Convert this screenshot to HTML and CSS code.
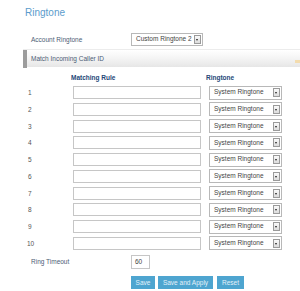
FILE: index.html
```html
<!DOCTYPE html>
<html>
<head>
<meta charset="utf-8">
<link rel="stylesheet" href="styles.css">
</head>
<body>
<div class="page">
  <h1 class="title">Ringtone</h1>
  <div class="account">
    <span class="label">Account Ringtone</span>
    <div class="select sel-account"><span class="sel-text">Custom Ringtone 2</span><span class="arrow"></span></div>
  </div>
  <div class="bar"><span class="bar-accent"></span><span class="bar-text">Match Incoming Caller ID</span><span class="bar-icon"></span></div>
  <div class="heads">
    <span class="h-rule">Matching Rule</span>
    <span class="h-ring">Ringtone</span>
  </div>
  <div class="rules">
    <div class="row"><span class="num">1</span><input class="inp" type="text"><div class="select sel-row"><span class="sel-text">System Ringtone</span><span class="arrow"></span></div></div>
    <div class="row"><span class="num">2</span><input class="inp" type="text"><div class="select sel-row"><span class="sel-text">System Ringtone</span><span class="arrow"></span></div></div>
    <div class="row"><span class="num">3</span><input class="inp" type="text"><div class="select sel-row"><span class="sel-text">System Ringtone</span><span class="arrow"></span></div></div>
    <div class="row"><span class="num">4</span><input class="inp" type="text"><div class="select sel-row"><span class="sel-text">System Ringtone</span><span class="arrow"></span></div></div>
    <div class="row"><span class="num">5</span><input class="inp" type="text"><div class="select sel-row"><span class="sel-text">System Ringtone</span><span class="arrow"></span></div></div>
    <div class="row"><span class="num">6</span><input class="inp" type="text"><div class="select sel-row"><span class="sel-text">System Ringtone</span><span class="arrow"></span></div></div>
    <div class="row"><span class="num">7</span><input class="inp" type="text"><div class="select sel-row"><span class="sel-text">System Ringtone</span><span class="arrow"></span></div></div>
    <div class="row"><span class="num">8</span><input class="inp" type="text"><div class="select sel-row"><span class="sel-text">System Ringtone</span><span class="arrow"></span></div></div>
    <div class="row"><span class="num">9</span><input class="inp" type="text"><div class="select sel-row"><span class="sel-text">System Ringtone</span><span class="arrow"></span></div></div>
    <div class="row"><span class="num num10">10</span><input class="inp" type="text"><div class="select sel-row"><span class="sel-text">System Ringtone</span><span class="arrow"></span></div></div>
  </div>
  <div class="timeout">
    <span class="label">Ring Timeout</span>
    <div class="tinput">60</div>
  </div>
  <div class="buttons">
    <button class="btn btn-save">Save</button>
    <button class="btn btn-apply">Save and Apply</button>
    <button class="btn btn-reset">Reset</button>
  </div>
</div>
</body>
</html>
```
FILE: styles.css
```css
* { box-sizing: border-box; }
html, body { margin: 0; padding: 0; background: #fff; }
body {
  font-family: "Liberation Sans", Arial, sans-serif;
  font-size: 6.5px;
  color: #4a5566;
  width: 300px;
  height: 291px;
  overflow: hidden;
}
.page { position: relative; }
.title {
  margin: 0;
  padding: 7px 0 0 25px;
  height: 33px;
  font-size: 10px;
  font-weight: normal;
  color: #5b9ccc;
  line-height: 12px;
}
.account {
  display: flex;
  align-items: center;
  height: 13px;
}
.label {
  width: 131px;
  padding-left: 31px;
  color: #4d5d75;
}
.select {
  display: flex;
  align-items: center;
  justify-content: space-between;
  border: 1px solid #b8b8b8;
  background: #fff;
  padding: 0 1px 0 4px;
  color: #444;
}
.sel-account { width: 72px; height: 13px; }
.sel-row { width: 73px; height: 13px; }
.sel-text { white-space: nowrap; line-height: 1; }
.arrow {
  width: 7px;
  height: 9px;
  border: 1px solid #9a9a9a;
  background: linear-gradient(#fafafa, #dcdcdc);
  position: relative;
  flex: none;
}
.arrow::after {
  content: "";
  position: absolute;
  left: 1px;
  top: 3px;
  border-left: 1.5px solid transparent;
  border-right: 1.5px solid transparent;
  border-top: 2px solid #222;
}
.bar {
  margin: 3px 0 0 23px;
  height: 18px;
  display: flex;
  align-items: center;
  background: linear-gradient(#ffffff, #f4f4f4 50%, #e6e6e6);
  border-top: 1px solid #ececec;
  position: relative;
}
.bar-accent {
  width: 4px;
  height: 18px;
  background: #9c9c9c;
  flex: none;
}
.bar-text {
  padding-left: 4px;
  color: #4d5d75;
}
.bar-icon {
  position: absolute;
  right: 0;
  top: 10px;
  width: 5px;
  height: 3px;
  background: #f3dcae;
}
.heads {
  position: relative;
  height: 19px;
  font-weight: bold;
  color: #254777;
}
.h-rule { position: absolute; left: 71px; top: 7px; }
.h-ring { position: absolute; left: 206px; top: 7px; }
.rules {
  display: flex;
  flex-direction: column;
  gap: 3.78px;
}
.row {
  display: flex;
  align-items: center;
  height: 13px;
}
.num {
  width: 73px;
  padding-left: 28px;
  color: #555;
}
.num10 { padding-left: 27px; }
.inp {
  width: 128px;
  height: 13px;
  border: 1px solid #c6c6c6;
  margin: 0 8px 0 0;
  padding: 0;
  background: #fff;
  outline: none;
}
.sel-row { height: 14px; }
.timeout {
  display: flex;
  align-items: center;
  margin-top: 5px;
  height: 14px;
}
.tinput {
  width: 19px;
  height: 14px;
  border: 1px solid #c6c6c6;
  padding-left: 3px;
  line-height: 12px;
  color: #444;
}
.buttons {
  display: flex;
  gap: 3px;
  margin: 7px 0 0 131px;
}
.btn {
  font-family: inherit;
  font-size: 6.5px;
  color: #e3f1fa;
  background: #4ea5d0;
  border: none;
  height: 13px;
  padding: 0;
  border-radius: 0;
}
.btn-save { width: 24px; }
.btn-apply { width: 55px; }
.btn-reset { width: 27px; margin-left: 1px; }
```
